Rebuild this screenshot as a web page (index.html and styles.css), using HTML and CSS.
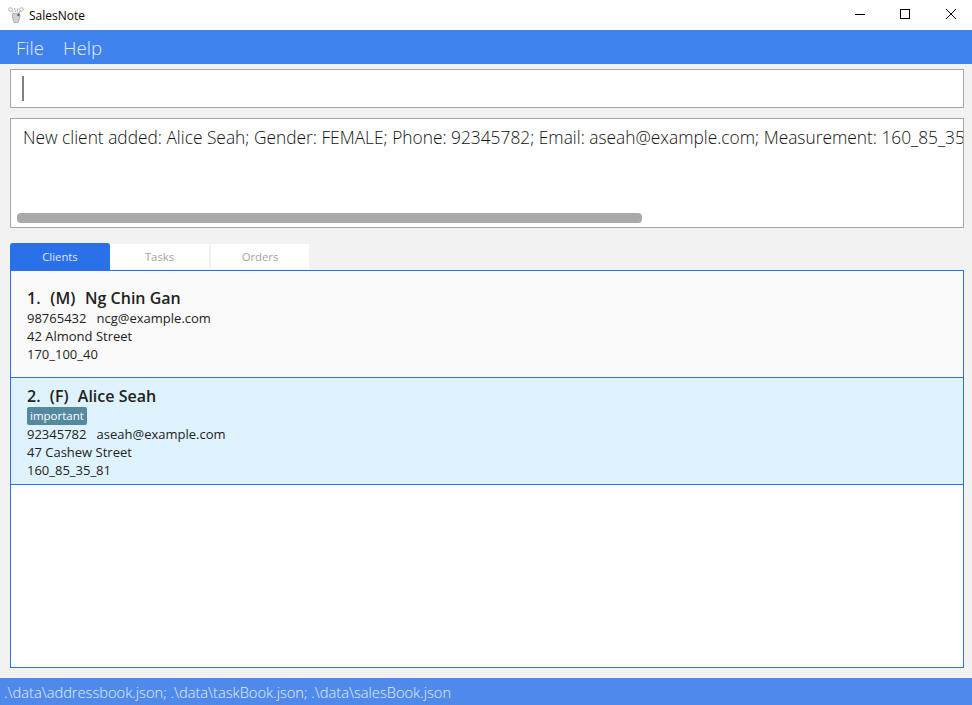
FILE: index.html
```html
<html>
  <head>
    <title>SalesNote</title>
    <link rel="stylesheet" href="styles.css">
  </head>
  <body>
    <div class="title-bar">
      <svg class="app-icon" width="16" height="16" viewBox="0 0 16 16" fill="none" stroke="#b0b0b0">
        <circle cx="2.500" cy="2.500" r="1.800" />
        <circle cx="13.500" cy="2.500" r="1.800" />
        <path d="M6.500 1 L7.500 5 M10 1 L9 5 M4 4 L6 7 M12 4 L10.500 7" />
        <path d="M4.500 7 L11.500 6 L12 10 L10 15.500 L6 15.500 L4.500 10 Z" fill="#d2d2d2" />
        <circle cx="10.500" cy="8" r="1.300" fill="#666" stroke="none" />
      </svg>
      <span class="app-name">SalesNote</span>
      <div class="window-buttons">
        <svg width="46" height="30" viewBox="0 0 46 30" stroke="#000" fill="none"><path d="M21 14.500 H31" /></svg>
        <svg width="46" height="30" viewBox="0 0 46 30" stroke="#000" fill="none"><rect x="20.500" y="9.500" width="9" height="9" /></svg>
        <svg width="46" height="30" viewBox="0 0 46 30" stroke="#000" fill="none"><path d="M20 9 L30 19 M30 9 L20 19" /></svg>
      </div>
    </div>

    <div class="menu-bar">
      <span>File</span>
      <span>Help</span>
    </div>

    <div class="main">
      <div class="command-box"><span class="caret"></span></div>

      <div class="result-box">
        <div class="result-text">New client added: Alice Seah; Gender: FEMALE; Phone: 92345782; Email: aseah@example.com; Measurement: 160_85_35</div>
        <div class="scroll-thumb"></div>
      </div>

      <div class="tabs">
        <div class="tab active">Clients</div>
        <div class="tab">Tasks</div>
        <div class="tab">Orders</div>
      </div>

      <div class="client-list">
        <div class="client">
          <div class="client-name"><span class="name-part">1.&nbsp;</span> <span class="name-part">(M)&nbsp;</span> Ng Chin Gan</div>
          <div class="client-line">98765432 &nbsp; ncg@example.com</div>
          <div class="client-line">42 Almond Street</div>
          <div class="client-line">170_100_40</div>
        </div>
        <div class="client selected">
          <div class="client-name"><span class="name-part">2.&nbsp;</span> <span class="name-part">(F)&nbsp;</span> Alice Seah</div>
          <div class="tag-row"><span class="tag">important</span></div>
          <div class="client-line">92345782 &nbsp; aseah@example.com</div>
          <div class="client-line">47 Cashew Street</div>
          <div class="client-line">160_85_35_81</div>
        </div>
      </div>
    </div>

    <div class="status-bar">.\data\addressbook.json; .\data\taskBook.json; .\data\salesBook.json</div>
  </body>
</html>
```

FILE: styles.css
```css
html,
body {
  margin: 0;
  padding: 0;
  height: 100%;
  overflow: hidden;
}

body {
  display: flex;
  flex-direction: column;
  background-color: #f2f2f2;
  font-family: "Open Sans", sans-serif;
  color: #222;
}

.title-bar {
  flex: 0 0 30px;
  display: flex;
  align-items: center;
  background-color: #fff;
  padding-left: 8px;
}

.app-icon {
  margin-right: 5px;
}

.app-name {
  font-size: 12px;
  color: #000;
}

.window-buttons {
  margin-left: auto;
  display: flex;
}

.window-buttons svg {
  display: block;
}

.menu-bar {
  flex: 0 0 34px;
  display: flex;
  align-items: center;
  gap: 19px;
  padding-left: 16px;
  background-color: #3f82ec;
  color: #e4edfc;
  font-size: 18.670px;
  font-weight: 300;
}

.main {
  flex: 1 1 auto;
  min-height: 0;
  display: flex;
  flex-direction: column;
  padding: 5px 8px 10px 10px;
}

.command-box {
  flex: 0 0 37px;
  display: flex;
  align-items: center;
  padding-left: 11px;
  background-color: #fff;
  border: 1px solid #a6a6a6;
}

.caret {
  width: 2px;
  height: 25px;
  background-color: #808080;
}

.result-box {
  flex: 0 0 108px;
  display: flex;
  flex-direction: column;
  justify-content: space-between;
  margin-top: 10px;
  background-color: #fff;
  border: 1px solid #a6a6a6;
  overflow: hidden;
}

.result-text {
  padding: 6px 0 0 12px;
  font-size: 17.330px;
  font-weight: 300;
  color: #111;
  white-space: nowrap;
}

.scroll-thumb {
  width: 625px;
  height: 10px;
  margin: 0 0 4px 6px;
  background-color: #a9a9a9;
  border-radius: 4px;
}

.tabs {
  flex: 0 0 27px;
  display: flex;
  margin-top: 15px;
}

.tab {
  width: 99px;
  margin: 1px 2px 1px 0;
  display: flex;
  align-items: center;
  justify-content: center;
  background-color: #fff;
  color: #a8a29a;
  font-size: 11.300px;
}

.tab:last-child {
  width: 98px;
}

.tab.active {
  width: 100px;
  margin: 0;
  background-color: #2a70e8;
  border-radius: 3px 3px 0 0;
  color: #dfeafc;
}

.client-list {
  flex: 1 1 auto;
  min-height: 0;
  background-color: #fff;
  border: 1px solid #2a70e8;
}

.client {
  height: 106px;
  background-color: #fafafa;
  padding-left: 16px;
  overflow: hidden;
}

.client.selected {
  background-color: #dff3fe;
  border-top: 1px solid #2a70e8;
  border-bottom: 1px solid #2a70e8;
}

.client-name {
  margin-top: 16px;
  font-size: 16px;
  font-weight: 600;
  line-height: 22px;
}

.name-part {
  margin-right: 1.500px;
}

.client.selected .client-name {
  margin-top: 7px;
}

.client.selected .name-part {
  margin-right: 1px;
}

.client-line {
  font-size: 13px;
  line-height: 18px;
}

.tag-row {
  height: 18px;
  display: flex;
}

.tag {
  padding: 0 3px;
  background-color: #54899f;
  border-radius: 2px;
  color: #fff;
  font-size: 11.500px;
  font-weight: 500;
  line-height: 18px;
}

.status-bar {
  flex: 0 0 27px;
  display: flex;
  align-items: center;
  padding-left: 4px;
  background-color: #4f8aeb;
  color: #e4edfc;
  font-size: 14.670px;
  font-weight: 300;
}
```
